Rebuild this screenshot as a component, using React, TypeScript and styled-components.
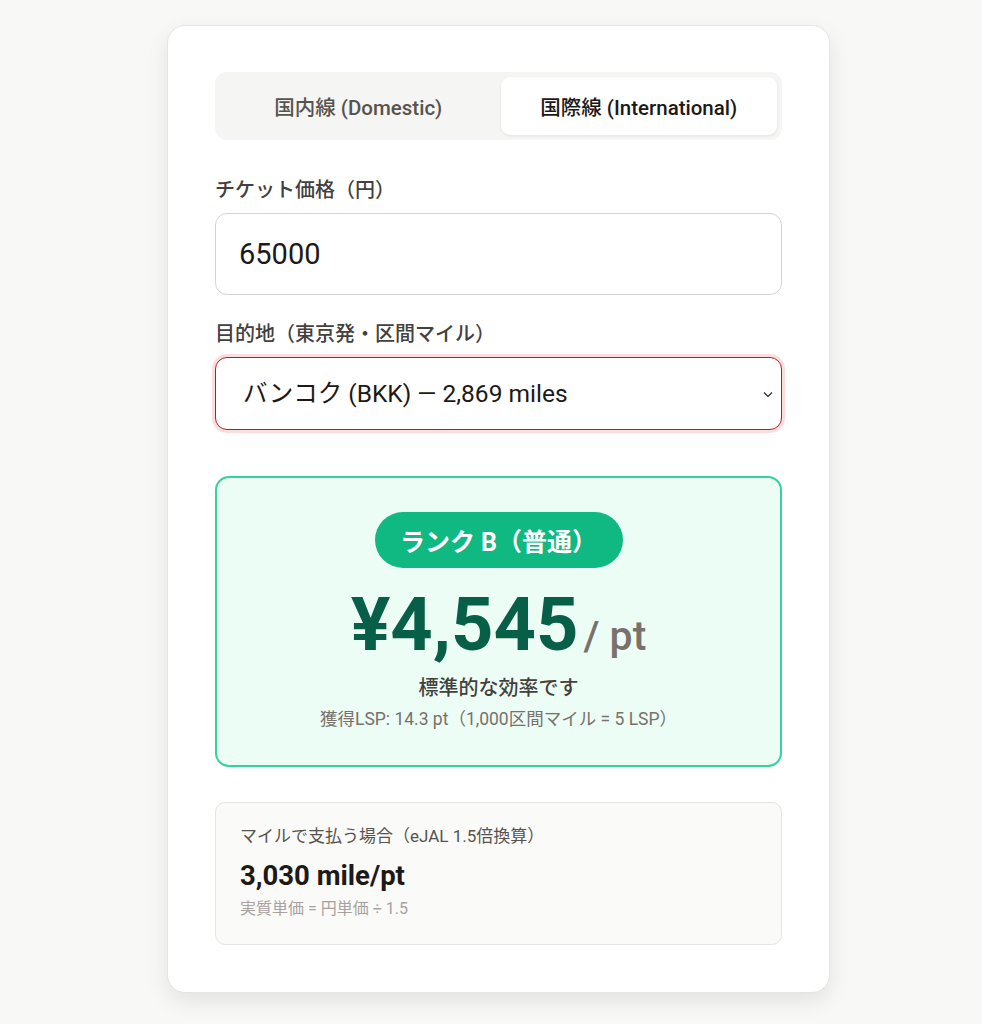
import { useState } from "react";
import styled, { createGlobalStyle, css } from "styled-components";

const GlobalStyle = createGlobalStyle`
  html, body {
    margin: 0;
    background: #f8f8f6;
  }
  body {
    font-family: Roboto, "Noto Sans CJK JP", sans-serif;
    color: #1c1917;
  }
`;

const Page = styled.div`
  padding: 25px 0 30px 167px;
`;

const Card = styled.div`
  box-sizing: border-box;
  width: 663px;
  padding: 46px 47px 47px;
  background: #fff;
  border: 1px solid #e7e5e4;
  border-radius: 18px;
  box-shadow: 0 8px 22px rgba(0, 0, 0, 0.09);
`;

const Tabs = styled.div`
  display: grid;
  grid-template-columns: 1fr 1fr;
  gap: 4px;
  padding: 5px;
  background: #f5f5f4;
  border-radius: 12px;
  margin-bottom: 36px;
`;

const Tab = styled.button<{ $active?: boolean }>`
  height: 58px;
  border: none;
  border-radius: 9px;
  font-family: inherit;
  font-size: 20.5px;
  font-weight: 500;
  cursor: pointer;
  background: transparent;
  color: #57534e;
  ${(p) =>
    p.$active &&
    css`
      background: #fff;
      color: #1c1917;
      box-shadow: 0 1px 3px rgba(0, 0, 0, 0.08);
    `}
`;

const Field = styled.div`
  display: flex;
  flex-direction: column;
  gap: 9px;
  margin-bottom: 25px;
`;

const Label = styled.label`
  font-size: 20px;
  line-height: 28px;
  font-weight: 500;
  color: #44403c;
`;

const control = css`
  box-sizing: border-box;
  width: 100%;
  border-radius: 12px;
  font-family: inherit;
  color: #1c1917;
  background: #fff;
  outline: none;
`;

const Input = styled.input`
  ${control};
  height: 82px;
  padding: 0 23px;
  font-size: 29px;
  border: 1.5px solid #d6d3d1;
`;

const SelectWrap = styled.div`
  position: relative;
`;

const Select = styled.select`
  ${control};
  appearance: none;
  height: 73px;
  padding: 0 27px;
  font-size: 24.5px;
  border: 1.5px solid #b91c1c;
  box-shadow: 0 0 0 3px rgba(239, 68, 68, 0.18);
`;

const Chevron = styled.svg`
  position: absolute;
  right: 8px;
  top: 50%;
  width: 12px;
  height: 12px;
  transform: translateY(-50%);
  pointer-events: none;
  color: #292524;
`;

const Result = styled.div`
  margin-top: 46px;
  padding: 34px 20px 34px;
  background: #ecfdf5;
  border: 2.5px solid #34d399;
  border-radius: 14px;
  display: flex;
  flex-direction: column;
  align-items: center;
`;

const Badge = styled.div`
  display: flex;
  align-items: center;
  justify-content: center;
  width: 248px;
  height: 56px;
  border-radius: 28px;
  background: #10b981;
  color: #fff;
  font-size: 25px;
  font-weight: 700;
`;

const PriceRow = styled.div`
  display: flex;
  align-items: baseline;
  gap: 5px;
  margin-top: 20px;
  line-height: 1;
`;

const Price = styled.span`
  font-size: 74px;
  font-weight: 700;
  color: #065f46;
`;

const Unit = styled.span`
  font-size: 41px;
  font-weight: 500;
  color: #78716c;
`;

const Message = styled.div`
  margin-top: 12px;
  font-size: 20px;
  line-height: 28px;
  font-weight: 500;
  color: #44403c;
`;

const Note = styled.div`
  margin-top: 5px;
  font-size: 17.5px;
  line-height: 24px;
  color: #78716c;
`;

const MileBox = styled.div`
  margin-top: 35px;
  padding: 20px 24px 24px;
  background: #fafaf9;
  border: 1px solid #e7e5e4;
  border-radius: 10px;
`;

const MileLabel = styled.div`
  font-size: 17px;
  line-height: 26px;
  color: #57534e;
`;

const MileValue = styled.div`
  margin-top: 10px;
  font-size: 27.5px;
  line-height: 34px;
  font-weight: 700;
  color: #1c1917;
`;

const MileFormula = styled.div`
  margin-top: 5px;
  font-size: 16px;
  line-height: 22px;
  color: #a8a29e;
`;

export default function App() {
  const [route, setRoute] = useState<"dom" | "intl">("intl");
  const [price, setPrice] = useState("65000");

  return (
    <Page>
      <GlobalStyle />
      <Card>
        <Tabs>
          <Tab $active={route === "dom"} onClick={() => setRoute("dom")}>
            国内線 (Domestic)
          </Tab>
          <Tab $active={route === "intl"} onClick={() => setRoute("intl")}>
            国際線 (International)
          </Tab>
        </Tabs>

        <Field>
          <Label>チケット価格（円）</Label>
          <Input value={price} onChange={(e) => setPrice(e.target.value)} />
        </Field>

        <Field>
          <Label>目的地（東京発・区間マイル）</Label>
          <SelectWrap>
            <Select defaultValue="bkk">
              <option value="bkk">バンコク (BKK) — 2,869 miles</option>
            </Select>
            <Chevron viewBox="0 0 12 12">
              <path d="M2 4.5l4 4 4-4" fill="none" stroke="currentColor" strokeWidth="1.2" />
            </Chevron>
          </SelectWrap>
        </Field>

        <Result>
          <Badge>ランク B（普通）</Badge>
          <PriceRow>
            <Price>¥4,545</Price>
            <Unit>/ pt</Unit>
          </PriceRow>
          <Message>標準的な効率です</Message>
          <Note>獲得LSP: 14.3 pt（1,000区間マイル = 5 LSP）</Note>
        </Result>

        <MileBox>
          <MileLabel>マイルで支払う場合（eJAL 1.5倍換算）</MileLabel>
          <MileValue>3,030 mile/pt</MileValue>
          <MileFormula>実質単価 = 円単価 ÷ 1.5</MileFormula>
        </MileBox>
      </Card>
    </Page>
  );
}
